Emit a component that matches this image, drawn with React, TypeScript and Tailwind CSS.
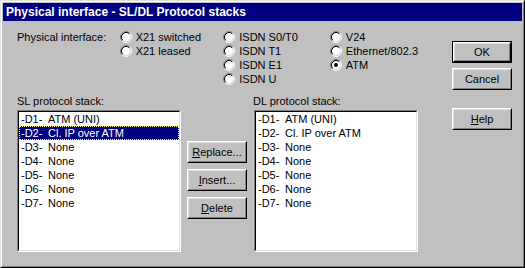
import type { ReactNode } from 'react';

const font = "font-['Liberation_Sans',Arial,sans-serif]";

function Radio({ label, checked = false }: { label: string; checked?: boolean }) {
  return (
    <div className="flex h-[14px] items-center gap-[4px]">
      <svg width="12" height="12" viewBox="0 0 12 12" className="shrink-0">
        <circle cx="6" cy="6" r="4.2" fill="#fff" />
        <path d="M2.11 9.89 A5.5 5.5 0 0 1 9.89 2.11" fill="none" stroke="#808080" strokeWidth="1" />
        <path d="M9.89 2.11 A5.5 5.5 0 0 1 2.11 9.89" fill="none" stroke="#fff" strokeWidth="1" />
        <path d="M2.82 9.18 A4.5 4.5 0 0 1 9.18 2.82" fill="none" stroke="#000" strokeWidth="1" />
        <path d="M9.18 2.82 A4.5 4.5 0 0 1 2.82 9.18" fill="none" stroke="#dfdfdf" strokeWidth="1" />
        {checked && <circle cx="6" cy="6" r="2" fill="#000" />}
      </svg>
      <span className="whitespace-nowrap">{label}</span>
    </div>
  );
}

function Button({ children, isDefault = false }: { children: ReactNode; isDefault?: boolean }) {
  const face = (
    <div className="h-full w-full border border-t-white border-l-white border-r-black border-b-black">
      <div className="flex h-full w-full items-center justify-center border border-t-[#dfdfdf] border-l-[#dfdfdf] border-r-[#808080] border-b-[#808080]">
        {children}
      </div>
    </div>
  );
  return (
    <div className={`h-[22px] w-[60px] ${isDefault ? 'border border-black' : ''}`}>{face}</div>
  );
}

const items = ['ATM (UNI)', 'Cl. IP over ATM', 'None', 'None', 'None', 'None', 'None'];

function ListBox({ selected }: { selected?: number }) {
  return (
    <div className="h-[142px] w-[164px] border border-t-[#808080] border-l-[#808080] border-r-white border-b-white">
      <div className="h-full w-full border border-t-black border-l-black border-r-[#dfdfdf] border-b-[#dfdfdf] bg-white">
        {items.map((it, i) => (
          <div
            key={i}
            className={`flex h-[14px] items-center pl-[2px] ${
              i === selected ? 'bg-[#000080] text-white outline outline-1 outline-dotted outline-[#ffff80] -outline-offset-1' : ''
            }`}
          >
            <span className="w-[27px] shrink-0">-D{i + 1}-</span>
            <span className="whitespace-nowrap">{it}</span>
          </div>
        ))}
      </div>
    </div>
  );
}

export default function App() {
  return (
    <div className={`${font} text-[11px] text-black`}>
      <div className="h-[268px] w-[525px] border border-t-[#dfdfdf] border-l-[#dfdfdf] border-r-black border-b-black bg-[#c0c0c0]">
        <div className="flex h-full w-full flex-col border border-t-white border-l-white border-r-[#808080] border-b-[#808080] p-px">
          <div className="flex h-[18px] shrink-0 items-center bg-[#000080] pl-[3px] text-[12px] font-bold text-white">
            Physical interface - SL/DL Protocol stacks
          </div>

          <div className="flex pl-[14px] pt-[9px]">
            <div className="flex w-[401px] flex-col">
              <div className="flex">
                <div className="flex h-[14px] w-[105px] items-center">Physical interface:</div>
                <div className="w-[106px]">
                  <Radio label="X21 switched" />
                  <Radio label="X21 leased" />
                </div>
                <div className="w-[109px]">
                  <Radio label="ISDN S0/T0" />
                  <Radio label="ISDN T1" />
                  <Radio label="ISDN E1" />
                  <Radio label="ISDN U" />
                </div>
                <div>
                  <Radio label="V24" />
                  <Radio label="Ethernet/802.3" />
                  <Radio label="ATM" checked />
                </div>
              </div>

              <div className="mt-[8px] flex h-[14px] items-center">
                <span className="w-[236px]">SL protocol stack:</span>
                <span>DL protocol stack:</span>
              </div>

              <div className="mt-[2px] flex">
                <ListBox selected={1} />
                <div className="ml-[6px] mr-[7px] mt-[31px] flex flex-col gap-[6px]">
                  <Button>
                    <span><u>R</u>eplace...</span>
                  </Button>
                  <Button>
                    <span><u>I</u>nsert...</span>
                  </Button>
                  <Button>
                    <span><u>D</u>elete</span>
                  </Button>
                </div>
                <ListBox />
              </div>
            </div>

            <div className="ml-[34px] mt-[11px] flex flex-col">
              <Button isDefault>OK</Button>
              <div className="mt-[5px]">
                <Button>Cancel</Button>
              </div>
              <div className="mt-[18px]">
                <Button>
                  <span><u>H</u>elp</span>
                </Button>
              </div>
            </div>
          </div>
        </div>
      </div>
    </div>
  );
}
